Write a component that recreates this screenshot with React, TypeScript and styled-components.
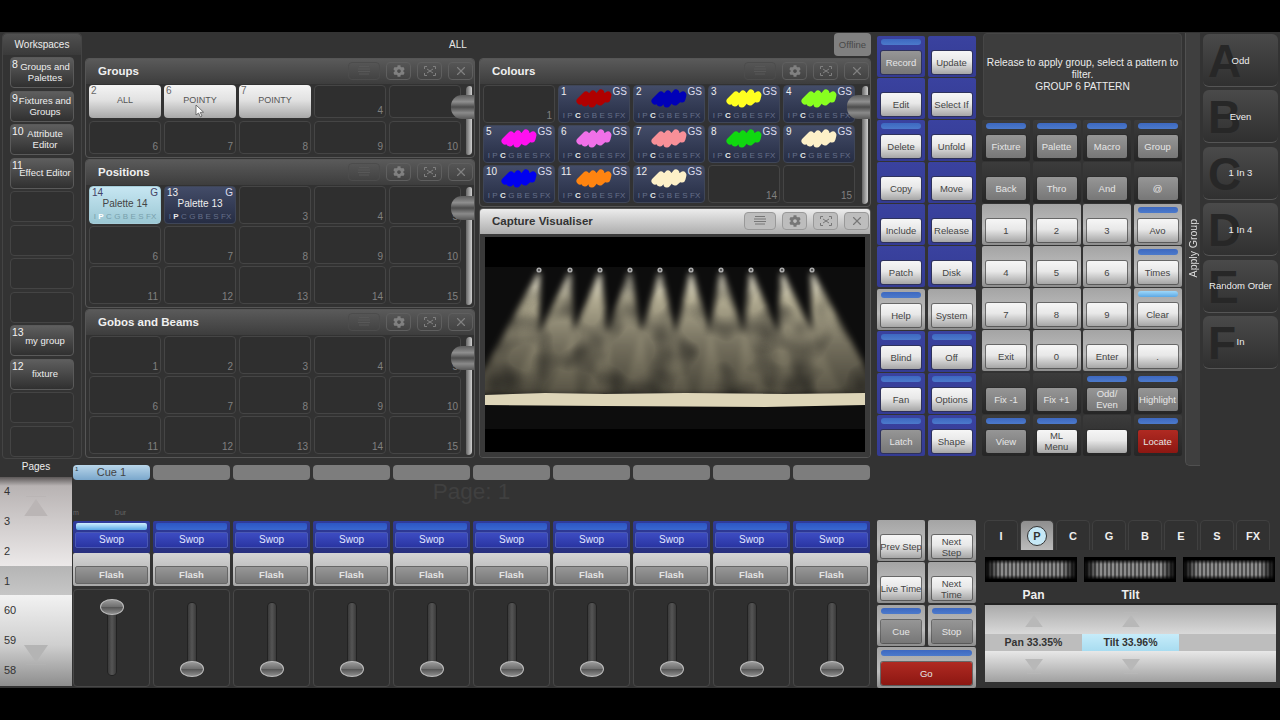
import styled, { createGlobalStyle, css } from "styled-components";
import { FaCog } from "react-icons/fa";
import { X } from "lucide-react";

const GlobalStyle = createGlobalStyle`
  html, body { margin: 0; padding: 0; background: #000; }
  * { box-sizing: border-box; }
  body { font-family: "Liberation Sans", "Noto Sans", sans-serif; }
`;

const Screen = styled.div`
  width: 1280px;
  height: 720px;
  padding: 32px 0;
  background: #000;
  overflow: hidden;
`;

const Main = styled.div`
  height: 656px;
  background: #333;
  display: grid;
  grid-template-columns: 876px 404px;
`;

const LeftArea = styled.div`
  display: flex;
  flex-direction: column;
`;

const Upper = styled.div`
  height: 428px;
  display: flex;
`;

const Sidebar = styled.div`
  width: 80px;
  height: 426px;
  margin: 1px 3px 0 2px;
  border: 1px solid #444;
  border-radius: 4px;
  display: flex;
  flex-direction: column;
`;

const SidebarHead = styled.div`
  height: 21px;
  background: linear-gradient(#505050, #3a3a3a);
  border-radius: 4px 4px 0 0;
  color: #eee;
  font-size: 10px;
  line-height: 21px;
  text-align: center;
`;

const SidebarList = styled.div`
  display: grid;
  grid-template-rows: repeat(12, 31px);
  row-gap: 2.5px;
  padding: 2px 7px;
`;

const WorkspaceBtn = styled.div<{ $filled: boolean }>`
  position: relative;
  border: 1px solid ${(p) => (p.$filled ? "#5a5a5a" : "#444")};
  border-radius: 4px;
  background: ${(p) => (p.$filled ? "linear-gradient(#5e5e5e, #303030)" : "#303030")};
  color: #eee;
  font-size: 9.5px;
  line-height: 11px;
  padding: 0 1px 1px 7px;
  display: flex;
  align-items: center;
  justify-content: center;
  text-align: center;
`;

const WorkspaceNum = styled.span`
  position: absolute;
  left: 1px;
  top: 1px;
  font-size: 10.5px;
  line-height: 10px;
  color: #f2f2f2;
`;

const WindowArea = styled.div`
  width: 786px;
  display: flex;
  flex-direction: column;
`;

const TopBar = styled.div`
  height: 26px;
  display: flex;
  align-items: flex-start;
`;

const TopTitle = styled.div`
  flex: 1;
  color: #e8e8e8;
  font-size: 10px;
  line-height: 26px;
  text-align: center;
`;

const Offline = styled.div`
  width: 37px;
  height: 23px;
  margin: 1px 0 0 3px;
  border-radius: 4px;
  background: #808080;
  color: #484848;
  font-size: 9.5px;
  line-height: 23px;
  text-align: center;
`;

const WindowCols = styled.div`
  display: grid;
  grid-template-columns: 390px 392px;
  column-gap: 4px;
`;

const WindowStack = styled.div`
  display: flex;
  flex-direction: column;
  gap: 1px;
`;

const Win = styled.div<{ $h: number }>`
  position: relative;
  height: ${(p) => p.$h}px;
  border: 1px solid #565656;
  border-radius: 4px;
  background: #323232;
  display: flex;
  flex-direction: column;
  overflow: hidden;
`;

const WinTitle = styled.div<{ $light?: boolean }>`
  height: 25px;
  flex: none;
  display: flex;
  align-items: center;
  padding: 0 1px 2px 12px;
  background: ${(p) => (p.$light ? "linear-gradient(#ececec, #adadad)" : "linear-gradient(#5a5a5a, #3d3d3d)")};
  color: ${(p) => (p.$light ? "#333" : "#f0f0f0")};
  font-size: 11.5px;
  font-weight: 700;
`;

const WinName = styled.div`
  flex: 1;
`;

const WinTools = styled.div`
  display: flex;
  gap: 6px;
`;

const WinTool = styled.div<{ $w: number; $light?: boolean; $dim?: boolean }>`
  width: ${(p) => p.$w}px;
  height: 18px;
  border: 1px solid ${(p) => (p.$light ? "#999" : p.$dim ? "#4c4c4c" : "#5f5f5f")};
  border-radius: 4px;
  display: flex;
  align-items: center;
  justify-content: center;
  color: ${(p) => (p.$light ? "#777" : p.$dim ? "#585858" : "#808080")};
  background: ${(p) => (p.$light ? "#bdbdbd" : "transparent")};
`;

const CellGrid = styled.div<{ $row: number; $gap: number; $rows: number }>`
  display: grid;
  grid-template-columns: repeat(5, 72px);
  grid-template-rows: repeat(${(p) => p.$rows}, ${(p) => p.$row}px);
  column-gap: 3px;
  row-gap: ${(p) => p.$gap}px;
  padding: 1px 0 0 3px;
`;

const EmptyCell = styled.div`
  position: relative;
  border: 1px solid #454545;
  border-radius: 4px;
  background: #2f2f2f;
`;

const CellCorner = styled.span`
  position: absolute;
  right: 2px;
  bottom: 0;
  color: #808080;
  font-size: 10px;
  line-height: 12px;
`;

const GroupCell = styled.div`
  position: relative;
  border-radius: 4px;
  background: linear-gradient(#f4f4f4, #e2e2e2 45%, #a8a8a8);
  color: #555;
  font-size: 9px;
  line-height: 31px;
  text-align: center;
`;

const CellNum = styled.span<{ $color: string }>`
  position: absolute;
  left: 2px;
  top: 1px;
  color: ${(p) => p.$color};
  font-size: 10px;
  line-height: 10px;
`;

const CellTag = styled.span<{ $color: string }>`
  position: absolute;
  right: 2px;
  top: 1px;
  color: ${(p) => p.$color};
  font-size: 10px;
  line-height: 10px;
`;

const Cursor = styled.svg`
  position: absolute;
  left: 31px;
  top: 19px;
`;

const PaletteCell = styled.div<{ $on?: boolean }>`
  position: relative;
  border: 1px solid ${(p) => (p.$on ? "#a5ccd8" : "#3f4658")};
  border-radius: 4px;
  background: ${(p) => (p.$on ? "linear-gradient(#c6e6f2, #9cc8d4)" : "linear-gradient(#434c68, #262d44)")};
  display: flex;
  flex-direction: column;
  align-items: center;
`;

const PaletteName = styled.div<{ $on?: boolean }>`
  margin-top: 10px;
  color: ${(p) => (p.$on ? "#444" : "#eee")};
  font-size: 10px;
  line-height: 13px;
`;

const PaletteFoot = styled.div<{ $on?: boolean }>`
  position: absolute;
  left: 0;
  right: 0;
  bottom: 1px;
  display: flex;
  justify-content: center;
  gap: 2.4px;
  font-size: 8px;
  line-height: 10px;
  color: ${(p) => (p.$on ? "#78a0ac" : "#66708a")};
`;

const FootLetter = styled.span<{ $on: boolean; $light?: boolean }>`
  ${(p) =>
    p.$on &&
    css`
      font-weight: 700;
      color: ${p.$light ? "#fff" : "#e8e8e8"};
    `}
`;

const Swatch = styled.svg`
  margin-top: 2px;
`;

const Scroll = styled.div<{ $top: number }>`
  position: absolute;
  right: 0;
  top: 25px;
  bottom: 2px;
  width: 12px;
  &::before {
    content: "";
    position: absolute;
    right: 2px;
    top: 2px;
    bottom: 0;
    width: 6px;
    border-radius: 4px 2px 4px 2px;
    background: linear-gradient(90deg, #666, #cfcfcf);
  }
  &::after {
    content: "";
    position: absolute;
    right: 0;
    top: ${(p) => p.$top}px;
    width: 23px;
    height: 24px;
    border-radius: 11px 0 0 11px;
    background: linear-gradient(#5c5c5c, #8f8f8f 28%, #4c4c4c 50%, #8a8a8a 74%, #585858);
  }
`;

const VisBody = styled.div`
  flex: 1;
  padding: 3px 5px 4px;
  background: #3a3a3a;
  display: flex;
`;

const Lower = styled.div`
  height: 228px;
  display: grid;
  grid-template-columns: 72px 804px;
`;

const PagesCol = styled.div`
  display: flex;
  flex-direction: column;
`;

const PagesLabel = styled.div`
  height: 17px;
  color: #eee;
  font-size: 10px;
  line-height: 13px;
  text-align: center;
  background: #333;
`;

const PagesPanel = styled.div`
  width: 72px;
  height: 209px;
  display: grid;
  grid-template-rows: 89px 29px 91px;
`;

const PageSection = styled.div<{ $kind: "up" | "mid" | "down" }>`
  position: relative;
  display: flex;
  flex-direction: column;
  justify-content: ${(p) => (p.$kind === "up" ? "flex-end" : "flex-start")};
  background: ${(p) =>
    p.$kind === "up"
      ? "linear-gradient(#5c5858 0, #b8b3b3 10%, #ece9e9 100%)"
      : p.$kind === "mid"
        ? "linear-gradient(#b5b5b5, #c6c6c6)"
        : "linear-gradient(#f2f2f2, #cfcfcf 55%, #8d8d8d)"};
`;

const PageNum = styled.div`
  height: 30.2px;
  padding-left: 4px;
  color: #333;
  font-size: 11px;
  line-height: 30px;
`;

const PageArrow = styled.svg<{ $top: number }>`
  position: absolute;
  left: 24px;
  top: ${(p) => p.$top}px;
`;

const Faders = styled.div`
  padding: 5px 6px 0 1px;
`;

const TenCols = styled.div`
  display: grid;
  grid-template-columns: repeat(10, 77px);
  column-gap: 3px;
`;

const CueTab = styled.div<{ $on: boolean }>`
  position: relative;
  height: 15px;
  border-radius: 4px;
  background: ${(p) => (p.$on ? "linear-gradient(#b9d6ea, #7aa7cc)" : "#7d7d7d")};
  color: #444;
  font-size: 11px;
  line-height: 15px;
  text-align: center;
`;

const CueNum = styled.span`
  position: absolute;
  left: 2px;
  top: 0;
  font-size: 6px;
  line-height: 8px;
  color: #234;
`;

const PageGap = styled.div`
  height: 41px;
  display: grid;
  grid-template-columns: repeat(10, 77px);
  grid-template-rows: 41px;
  column-gap: 3px;
`;

const PageText = styled.div`
  grid-column: 1 / -1;
  grid-row: 1;
  color: #404040;
  font-size: 22.5px;
  line-height: 24px;
  text-align: center;
`;

const ColNotes = styled.div`
  grid-column: 1;
  grid-row: 1;
  display: flex;
  align-items: flex-end;
  gap: 36px;
  color: #666;
  font-size: 7px;
  line-height: 10px;
  padding-bottom: 3px;
`;

const Channel = styled.div`
  display: flex;
  flex-direction: column;
`;

const SwopCell = styled.div`
  height: 32px;
  padding: 2px 2px 0;
  border-radius: 2px;
  background: linear-gradient(#303c9c, #28307e);
  display: flex;
  flex-direction: column;
  gap: 2px;
`;

const SwopLed = styled.div<{ $on: boolean }>`
  height: 7px;
  margin: 0 1px;
  border-radius: 2px;
  background: ${(p) => (p.$on ? "linear-gradient(#cfefff, #5aa9e8)" : "linear-gradient(#2c56c4, #3a68d0)")};
`;

const SwopBtn = styled.div`
  height: 16px;
  border: 1px solid #4a58b4;
  border-radius: 2px;
  background: linear-gradient(#3d4cc2, #2a35a2);
  color: #e4e8ff;
  font-size: 10px;
  line-height: 14px;
  text-align: center;
`;

const FlashCell = styled.div`
  height: 33px;
  padding: 13px 2px 1px;
  border-radius: 2px;
  background: linear-gradient(#d4d4d4, #a9a9a9);
`;

const FlashBtn = styled.div`
  height: 18px;
  border: 1px solid #666;
  border-radius: 2px;
  background: linear-gradient(#979797, #777);
  color: #e4e4e4;
  font-size: 9.5px;
  font-weight: 700;
  line-height: 16px;
  text-align: center;
`;

const FaderCell = styled.div`
  position: relative;
  height: 98px;
  margin-top: 3px;
  border: 1px solid #484848;
  border-radius: 4px;
  background: #2f2f2f;
  display: flex;
  justify-content: center;
  padding-top: 13px;
`;

const FaderTrack = styled.div`
  width: 8px;
  height: 72px;
  border-radius: 5px;
  background: linear-gradient(90deg, #3a3a3a, #555, #3a3a3a);
  box-shadow: 0 0 0 1px #222;
`;

const FaderKnob = styled.div<{ $up: boolean }>`
  position: absolute;
  left: 26px;
  top: ${(p) => (p.$up ? 9 : 71)}px;
  width: 24px;
  height: 16px;
  border-radius: 50%;
  border: 1px solid #bdbdbd;
  background: linear-gradient(#9a9a9a, #6f6f6f 48%, #555 52%, #8f8f8f);
`;

const RightArea = styled.div`
  display: flex;
  flex-direction: column;
`;

const RightUpper = styled.div`
  height: 434px;
  display: flex;
`;

const KeyGrid = styled.div<{ $rows: number }>`
  display: grid;
  grid-template-rows: repeat(${(p) => p.$rows}, 41px);
  row-gap: 1.1px;
`;

const SideKeys = styled(KeyGrid)`
  width: 100px;
  margin: 4px 5px 0 1px;
  grid-template-columns: repeat(2, 48px);
  column-gap: 2.5px;
`;

const KeypadCol = styled.div`
  width: 200px;
  display: flex;
  flex-direction: column;
`;

const Message = styled.div`
  height: 84px;
  margin: 1px 0 3px 1px;
  padding: 23px 0 0;
  border: 1px solid #464646;
  border-radius: 4px;
  background: #3d3d3d;
  color: #ececec;
  font-size: 10.2px;
  line-height: 12px;
  text-align: center;
  white-space: nowrap;
`;

const KeypadGrid = styled(KeyGrid)`
  grid-template-columns: repeat(4, 48px);
  column-gap: 2.5px;
`;

const cellBg = {
  blue: "linear-gradient(#3a429f, #343b93)",
  grey: "linear-gradient(#a4a4a4, #bdbdbd 60%, #8e8e8e)",
  dark: "linear-gradient(#3c3c3c, #262626)",
};

const KeyCell = styled.div<{ $tone: keyof typeof cellBg }>`
  padding: 3px 4px;
  border-radius: 2px;
  background: ${(p) => cellBg[p.$tone]};
  display: flex;
  flex-direction: column;
`;

const Led = styled.div<{ $bright?: boolean }>`
  height: 6px;
  border-radius: 3px;
  background: ${(p) => (p.$bright ? "linear-gradient(#9ed8fa, #5ca8e4)" : "linear-gradient(#3d68c0, #4c7acb)")};
`;

const btnBg = {
  light: "linear-gradient(#f6f6f6, #e8e8e8 45%, #a6a6a6)",
  grey: "linear-gradient(#969696, #777)",
  red: "linear-gradient(#b02a22, #8c1712)",
};

const KeyBtn = styled.div<{ $tone: keyof typeof btnBg }>`
  height: 23px;
  margin-top: auto;
  border-radius: 2px;
  background: ${(p) => btnBg[p.$tone]};
  box-shadow: 0 0 0 1px rgba(40, 40, 40, 0.55);
  color: ${(p) => (p.$tone === "light" ? "#444" : "#e6e6e6")};
  font-size: 9.5px;
  line-height: 11px;
  display: flex;
  align-items: center;
  justify-content: center;
  text-align: center;
  white-space: nowrap;
`;

const Strip = styled.div`
  width: 15px;
  height: 433px;
  margin: 1px 3px 0 3px;
  border-left: 1px solid #505050;
  border-bottom: 1px solid #505050;
  border-radius: 0 0 0 5px;
  background: #3f3f3f;
  display: flex;
  align-items: center;
  justify-content: center;
`;

const StripText = styled.div`
  writing-mode: vertical-rl;
  transform: rotate(180deg);
  margin-top: -2px;
  color: #ddd;
  font-size: 10.5px;
`;

const ApplyList = styled.div`
  width: 75px;
  padding-top: 2px;
  display: grid;
  grid-template-rows: repeat(6, 53px);
  row-gap: 3.4px;
`;

const ApplyBtn = styled.div`
  position: relative;
  border-bottom: 1px solid #555;
  border-radius: 6px;
  background: linear-gradient(#4a4a4a, #303030);
  color: #eee;
  font-size: 9.5px;
  display: flex;
  align-items: center;
  justify-content: center;
`;

const ApplyLetter = styled.span`
  position: absolute;
  left: 5px;
  top: 2px;
  color: #272727;
  font-size: 46px;
  font-weight: 700;
  line-height: 50px;
`;

const ApplyLabel = styled.span`
  position: relative;
  white-space: nowrap;
`;

const RightLower = styled.div`
  margin-top: 54px;
  display: flex;
`;

const PlayGrid = styled.div`
  width: 100px;
  margin: 0 7px 0 1px;
  display: grid;
  grid-template-columns: repeat(2, 48px);
  grid-template-rows: repeat(4, 41px);
  gap: 1.3px 2.5px;
`;

const GoCell = styled(KeyCell)`
  grid-column: 1 / -1;
`;

const Attr = styled.div`
  width: 294px;
  display: flex;
  flex-direction: column;
`;

const Tabs = styled.div`
  display: flex;
  gap: 2px;
  height: 30px;
`;

const Tab = styled.div<{ $on: boolean }>`
  width: 34px;
  border: 1px solid #404040;
  border-bottom: none;
  border-radius: 5px 5px 0 0;
  background: ${(p) => (p.$on ? "linear-gradient(#8e8e8e, #bcbcbc)" : "#313131")};
  color: #eee;
  font-size: 11px;
  font-weight: 700;
  display: flex;
  align-items: center;
  justify-content: center;
`;

const TabDot = styled.div`
  width: 20px;
  height: 20px;
  border: 1px solid #333;
  border-radius: 50%;
  background: #c6e8f6;
  color: #333;
  line-height: 18px;
  text-align: center;
`;

const Wheels = styled.div`
  display: flex;
  gap: 7px;
  margin: 7px 0 0 1px;
`;

const Wheel = styled.div`
  width: 92px;
  height: 25px;
  background:
    linear-gradient(90deg, #000 0, transparent 16%, transparent 84%, #000 100%),
    linear-gradient(#000 0, #000 10%, transparent 28%, transparent 72%, #000 90%, #000 100%),
    repeating-linear-gradient(90deg, #8c8c8c 0 2px, #505050 2px 4px);
`;

const AttrNames = styled.div`
  height: 22px;
  margin-top: 1px;
  padding-left: 1px;
  display: grid;
  grid-template-columns: repeat(3, 97px);
  color: #eee;
  font-size: 12px;
  font-weight: 700;
  line-height: 24px;
  text-align: center;
  border-bottom: 2px solid #222;
`;

const AttrPanel = styled.div`
  width: 291px;
  margin-left: 1px;
  display: grid;
  grid-template-columns: repeat(3, 97px);
  grid-template-rows: 29px 17px 31px;
`;

const AttrTop = styled.div`
  background: linear-gradient(#aaa, #d9d9d9);
  display: flex;
  align-items: center;
  justify-content: center;
`;

const AttrBottom = styled.div`
  background: linear-gradient(#e8e8e8, #a0a0a0);
  display: flex;
  align-items: center;
  justify-content: center;
`;

const AttrValue = styled.div<{ $on?: boolean }>`
  background: ${(p) => (p.$on ? "linear-gradient(#c6ecfa, #a8dcf0)" : "#bdbdbd")};
  color: #333;
  font-size: 10.5px;
  font-weight: 700;
  line-height: 17px;
  text-align: center;
`;

const Arrow = ({ up, color, w, top }: { up: boolean; color: string; w: number; top?: number }) => {
  const h = w * 0.85;
  const shape = up ? `M${w / 2} 3 L${w} ${h} L0 ${h} Z M2 0 H${w - 2} V1 H2 Z` : `M0 0 H${w} L${w / 2} ${h - 3} Z M2 ${h - 1} H${w - 2} V${h} H2 Z`;
  const draw = <path d={shape} fill={color} />;
  return top === undefined ? (
    <svg width={w} height={h}>
      {draw}
    </svg>
  ) : (
    <PageArrow $top={top} width={w} height={h}>
      {draw}
    </PageArrow>
  );
};

const WindowTools = ({ light }: { light?: boolean }) => (
  <WinTools>
    <WinTool $w={32} $light={light} $dim>
      <svg width="14" height="11" viewBox="0 0 14 11" stroke="currentColor" strokeWidth="1">
        <path d="M2 1.5H12M1 4H13M1 6.5H13M2 9H12" />
      </svg>
    </WinTool>
    <WinTool $w={25} $light={light}>
      <FaCog size={12} />
    </WinTool>
    <WinTool $w={25} $light={light}>
      <svg width="14" height="12" viewBox="0 0 14 12" fill="none" stroke="currentColor" strokeWidth="1">
        <path d="M4 1.5H1.5V4M10 1.5H12.5V4M4 10.5H1.5V8M10 10.5H12.5V8M4 4L10 8M10 4L4 8" />
      </svg>
    </WinTool>
    <WinTool $w={25} $light={light}>
      <X size={14} />
    </WinTool>
  </WinTools>
);

const Empty = ({ n }: { n: number }) => (
  <EmptyCell>
    <CellCorner>{n}</CellCorner>
  </EmptyCell>
);

const LETTERS = ["I", "P", "C", "G", "B", "E", "S", "FX"];

const Foot = ({ active, on }: { active: string; on?: boolean }) => (
  <PaletteFoot $on={on}>
    {LETTERS.map((l) => (
      <FootLetter key={l} $on={l === active} $light={on}>
        {l}
      </FootLetter>
    ))}
  </PaletteFoot>
);

const Colour = ({ n, color }: { n: number; color: string }) => (
  <PaletteCell>
    <CellNum $color="#eee">{n}</CellNum>
    <CellTag $color="#dde">GS</CellTag>
    <Swatch width="38" height="21" viewBox="0 0 38 21" fill="none" stroke={color} strokeWidth="7" strokeLinecap="round" strokeLinejoin="round">
      <path d="M5 13 L11 7 L10 15 L18 6 L17 16 L26 5 L25 14 L33 7 L32 11" />
      <path d="M10 11 L30 9" strokeWidth="8" />
    </Swatch>
    <Foot active="C" />
  </PaletteCell>
);

const Window = ({ title, h, rowH, gap, rows, knob, children }: { title: string; h: number; rowH: number; gap: number; rows: number; knob: number; children: React.ReactNode }) => (
  <Win $h={h}>
    <WinTitle>
      <WinName>{title}</WinName>
      <WindowTools />
    </WinTitle>
    <CellGrid $row={rowH} $gap={gap} $rows={rows}>
      {children}
    </CellGrid>
    <Scroll $top={knob} />
  </Win>
);

const emptyRange = (from: number, to: number) => {
  const list = [];
  for (let i = from; i <= to; i++) list.push(<Empty key={i} n={i} />);
  return list;
};

const Visualiser = () => {
  const heads = [54, 85, 115, 145, 175, 206, 236, 266, 297, 327];
  return (
    <svg width="380" height="215" viewBox="0 0 380 215">
      <defs>
        <linearGradient id="beam" x1="0" y1="0" x2="0" y2="1">
          <stop offset="0" stopColor="#f6f2e0" stopOpacity="1" />
          <stop offset="0.22" stopColor="#c4bda0" stopOpacity="0.9" />
          <stop offset="0.6" stopColor="#8c8670" stopOpacity="0.8" />
          <stop offset="1" stopColor="#5a5646" stopOpacity="0.75" />
        </linearGradient>
        <filter id="smoke" x="-5%" y="-5%" width="110%" height="110%">
          <feGaussianBlur in="SourceGraphic" stdDeviation="3.2" result="soft" />
          <feTurbulence type="fractalNoise" baseFrequency="0.03" numOctaves="2" seed="4" result="noise" />
          <feColorMatrix in="noise" type="matrix" values="0 0 0 0 0 0 0 0 0 0 0 0 0 0 0 1.1 0 0 0 0.38" result="mask" />
          <feComposite in="soft" in2="mask" operator="in" />
        </filter>
        <filter id="floor">
          <feGaussianBlur stdDeviation="0.7" />
        </filter>
      </defs>
      <rect width="380" height="215" fill="#000" />
      <rect y="30" width="380" height="162" fill="#0d0d0d" />
      <g filter="url(#smoke)">
        {heads.map((x, i) => {
          const s = (i - 4.5) * 7.8;
          return <path key={x} d={`M${x - 1} 36 L${x + 1} 36 L${x + 34 + s} 158 L${x - 34 + s} 158 Z`} fill="url(#beam)" />;
        })}
      </g>
      <path d="M0 158 L60 156 L120 157 L200 156 L300 157 L380 156 L380 168 L280 170 L120 169 L0 168 Z" fill="#ddd5b8" filter="url(#floor)" />
      {heads.map((x) => (
        <g key={x}>
          <circle cx={x} cy="33" r="2.6" fill="#a9a9a9" />
          <circle cx={x} cy="33" r="0.9" fill="#333" />
        </g>
      ))}
    </svg>
  );
};

type Key = { label?: React.ReactNode; cell: keyof typeof cellBg; btn: keyof typeof btnBg; led?: boolean; bright?: boolean };

const k = (label: React.ReactNode, cell: Key["cell"], btn: Key["btn"], led = false, bright = false): Key => ({ label, cell, btn, led, bright });

const SIDE_KEYS: Key[] = [
  k("Record", "blue", "grey", true),
  k("Update", "blue", "light"),
  k("Edit", "blue", "light"),
  k("Select If", "blue", "light"),
  k("Delete", "blue", "light", true),
  k("Unfold", "blue", "light"),
  k("Copy", "blue", "light"),
  k("Move", "blue", "light"),
  k("Include", "blue", "light"),
  k("Release", "blue", "light"),
  k("Patch", "blue", "light"),
  k("Disk", "blue", "light"),
  k("Help", "grey", "light", true),
  k("System", "grey", "light"),
  k("Blind", "blue", "light", true),
  k("Off", "blue", "light", true),
  k("Fan", "blue", "light", true),
  k("Options", "blue", "light", true),
  k("Latch", "blue", "grey", true),
  k("Shape", "blue", "light", true),
];

const PAD_KEYS: Key[] = [
  k("Fixture", "dark", "grey", true),
  k("Palette", "dark", "grey", true),
  k("Macro", "dark", "grey", true),
  k("Group", "dark", "grey", true),
  k("Back", "dark", "grey"),
  k("Thro", "dark", "grey"),
  k("And", "dark", "grey"),
  k("@", "dark", "grey"),
  k("1", "grey", "light"),
  k("2", "grey", "light"),
  k("3", "grey", "light"),
  k("Avo", "grey", "light", true),
  k("4", "grey", "light"),
  k("5", "grey", "light"),
  k("6", "grey", "light"),
  k("Times", "grey", "light", true),
  k("7", "grey", "light"),
  k("8", "grey", "light"),
  k("9", "grey", "light"),
  k("Clear", "grey", "light", true, true),
  k("Exit", "grey", "light"),
  k("0", "grey", "light"),
  k("Enter", "grey", "light"),
  k(".", "grey", "light"),
  k("Fix -1", "dark", "grey"),
  k("Fix +1", "dark", "grey"),
  k(<>Odd/<br />Even</>, "dark", "grey", true),
  k("Highlight", "dark", "grey", true),
  k("View", "dark", "grey", true),
  k(<>ML<br />Menu</>, "dark", "light", true),
  k("", "dark", "light"),
  k("Locate", "dark", "red", true),
];

const PLAY_KEYS: Key[] = [
  k("Prev Step", "grey", "light"),
  k(<>Next<br />Step</>, "grey", "light"),
  k("Live Time", "grey", "light"),
  k(<>Next<br />Time</>, "grey", "light"),
  k("Cue", "grey", "grey", true),
  k("Stop", "grey", "grey", true),
];

const KeyView = ({ item }: { item: Key }) => (
  <KeyCell $tone={item.cell}>
    {item.led && <Led $bright={item.bright} />}
    <KeyBtn $tone={item.btn}>{item.label}</KeyBtn>
  </KeyCell>
);

const WORKSPACES: [string, React.ReactNode][] = [
  ["8", <>Groups and<br />Palettes</>],
  ["9", <>Fixtures and<br />Groups</>],
  ["10", <>Attribute<br />Editor</>],
  ["11", "Effect Editor"],
  ["", ""],
  ["", ""],
  ["", ""],
  ["", ""],
  ["13", "my group"],
  ["12", "fixture"],
  ["", ""],
  ["", ""],
];

const APPLY = [
  ["A", "Odd"],
  ["B", "Even"],
  ["C", "1 In 3"],
  ["D", "1 In 4"],
  ["E", "Random Order"],
  ["F", "In"],
];

const COLOURS: [number, string][] = [
  [1, "#b00000"],
  [2, "#0000b8"],
  [3, "#ffff20"],
  [4, "#88ff20"],
  [5, "#ff10f0"],
  [6, "#f070e8"],
  [7, "#f89098"],
  [8, "#10d810"],
  [9, "#fdf0c8"],
  [10, "#0000f0"],
  [11, "#ff8410"],
  [12, "#fdf0c8"],
];

const channels = Array.from({ length: 10 }, (_, i) => i);

const App = () => {
  return (
    <Screen>
      <GlobalStyle />
      <Main>
        <LeftArea>
          <Upper>
            <Sidebar>
              <SidebarHead>Workspaces</SidebarHead>
              <SidebarList>
                {WORKSPACES.map(([num, label], i) => (
                  <WorkspaceBtn key={i} $filled={num !== ""}>
                    {num && <WorkspaceNum>{num}</WorkspaceNum>}
                    {label}
                  </WorkspaceBtn>
                ))}
              </SidebarList>
            </Sidebar>
            <WindowArea>
              <TopBar>
                <TopTitle>ALL</TopTitle>
                <Offline>Offline</Offline>
              </TopBar>
              <WindowCols>
                <WindowStack>
                  <Window title="Groups" h={100} rowH={33} gap={3} rows={2} knob={11}>
                    <GroupCell>
                      <CellNum $color="#666">2</CellNum>ALL
                    </GroupCell>
                    <GroupCell>
                      <CellNum $color="#666">6</CellNum>POINTY
                      <Cursor width="10" height="14" viewBox="0 0 10 14">
                        <path d="M1 1 L1 11 L3.5 9 L5.5 13 L7 12 L5.2 8.4 L8.5 8.2 Z" fill="#fff" stroke="#555" strokeWidth="0.8" />
                      </Cursor>
                    </GroupCell>
                    <GroupCell>
                      <CellNum $color="#666">7</CellNum>POINTY
                    </GroupCell>
                    {emptyRange(4, 4)}
                    <EmptyCell />
                    {emptyRange(6, 10)}
                  </Window>
                  <Window title="Positions" h={149} rowH={38} gap={2} rows={3} knob={11}>
                    <PaletteCell $on>
                      <CellNum $color="#446">14</CellNum>
                      <CellTag $color="#446">G</CellTag>
                      <PaletteName $on>Palette 14</PaletteName>
                      <Foot active="P" on />
                    </PaletteCell>
                    <PaletteCell>
                      <CellNum $color="#eee">13</CellNum>
                      <CellTag $color="#dde">G</CellTag>
                      <PaletteName>Palette 13</PaletteName>
                      <Foot active="P" />
                    </PaletteCell>
                    {emptyRange(3, 15)}
                  </Window>
                  <Window title="Gobos and Beams" h={149} rowH={38} gap={2} rows={3} knob={11}>
                    {emptyRange(1, 15)}
                  </Window>
                </WindowStack>
                <WindowStack>
                  <Window title="Colours" h={149} rowH={38} gap={2} rows={3} knob={11}>
                    <Empty n={1} />
                    {COLOURS.map(([n, c]) => (
                      <Colour key={n} n={n} color={c} />
                    ))}
                    {emptyRange(14, 15)}
                  </Window>
                  <Win $h={250}>
                    <WinTitle $light>
                      <WinName>Capture Visualiser</WinName>
                      <WindowTools light />
                    </WinTitle>
                    <VisBody>
                      <Visualiser />
                    </VisBody>
                  </Win>
                </WindowStack>
              </WindowCols>
            </WindowArea>
          </Upper>
          <Lower>
            <PagesCol>
              <PagesLabel>Pages</PagesLabel>
              <PagesPanel>
                <PageSection $kind="up">
                  <Arrow up color="#bab5b5" w={24} top={19} />
                  <PageNum>4</PageNum>
                  <PageNum>3</PageNum>
                  <PageNum>2</PageNum>
                </PageSection>
                <PageSection $kind="mid">
                  <PageNum>1</PageNum>
                </PageSection>
                <PageSection $kind="down">
                  <Arrow up={false} color="#b4b4b4" w={24} top={50} />
                  <PageNum>60</PageNum>
                  <PageNum>59</PageNum>
                  <PageNum>58</PageNum>
                </PageSection>
              </PagesPanel>
            </PagesCol>
            <Faders>
              <TenCols>
                {channels.map((i) => (
                  <CueTab key={i} $on={i === 0}>
                    {i === 0 && <CueNum>1</CueNum>}
                    {i === 0 && "Cue 1"}
                  </CueTab>
                ))}
              </TenCols>
              <PageGap>
                <PageText>Page: 1</PageText>
                <ColNotes>
                  <span>m</span>
                  <span>Dur</span>
                </ColNotes>
              </PageGap>
              <TenCols>
                {channels.map((i) => (
                  <Channel key={i}>
                    <SwopCell>
                      <SwopLed $on={i === 0} />
                      <SwopBtn>Swop</SwopBtn>
                    </SwopCell>
                    <FlashCell>
                      <FlashBtn>Flash</FlashBtn>
                    </FlashCell>
                    <FaderCell>
                      <FaderTrack />
                      <FaderKnob $up={i === 0} />
                    </FaderCell>
                  </Channel>
                ))}
              </TenCols>
            </Faders>
          </Lower>
        </LeftArea>
        <RightArea>
          <RightUpper>
            <SideKeys $rows={10}>
              {SIDE_KEYS.map((item, i) => (
                <KeyView key={i} item={item} />
              ))}
            </SideKeys>
            <KeypadCol>
              <Message>
                Release to apply group, select a pattern to
                <br />
                filter.
                <br />
                GROUP 6 PATTERN
              </Message>
              <KeypadGrid $rows={8}>
                {PAD_KEYS.map((item, i) => (
                  <KeyView key={i} item={item} />
                ))}
              </KeypadGrid>
            </KeypadCol>
            <Strip>
              <StripText>Apply Group</StripText>
            </Strip>
            <ApplyList>
              {APPLY.map(([letter, label]) => (
                <ApplyBtn key={letter}>
                  <ApplyLetter>{letter}</ApplyLetter>
                  <ApplyLabel>{label}</ApplyLabel>
                </ApplyBtn>
              ))}
            </ApplyList>
          </RightUpper>
          <RightLower>
            <PlayGrid>
              {PLAY_KEYS.map((item, i) => (
                <KeyView key={i} item={item} />
              ))}
              <GoCell $tone="grey">
                <Led />
                <KeyBtn $tone="red">Go</KeyBtn>
              </GoCell>
            </PlayGrid>
            <Attr>
              <Tabs>
                {LETTERS.map((l) => (
                  <Tab key={l} $on={l === "P"}>
                    {l === "P" ? <TabDot>P</TabDot> : l}
                  </Tab>
                ))}
              </Tabs>
              <Wheels>
                <Wheel />
                <Wheel />
                <Wheel />
              </Wheels>
              <AttrNames>
                <span>Pan</span>
                <span>Tilt</span>
              </AttrNames>
              <AttrPanel>
                <AttrTop>
                  <Arrow up color="#b8b8b8" w={18} />
                </AttrTop>
                <AttrTop>
                  <Arrow up color="#b8b8b8" w={18} />
                </AttrTop>
                <AttrTop />
                <AttrValue>Pan 33.35%</AttrValue>
                <AttrValue $on>Tilt 33.96%</AttrValue>
                <AttrValue />
                <AttrBottom>
                  <Arrow up={false} color="#b8b8b8" w={18} />
                </AttrBottom>
                <AttrBottom>
                  <Arrow up={false} color="#b8b8b8" w={18} />
                </AttrBottom>
                <AttrBottom />
              </AttrPanel>
            </Attr>
          </RightLower>
        </RightArea>
      </Main>
    </Screen>
  );
};

export default App;
